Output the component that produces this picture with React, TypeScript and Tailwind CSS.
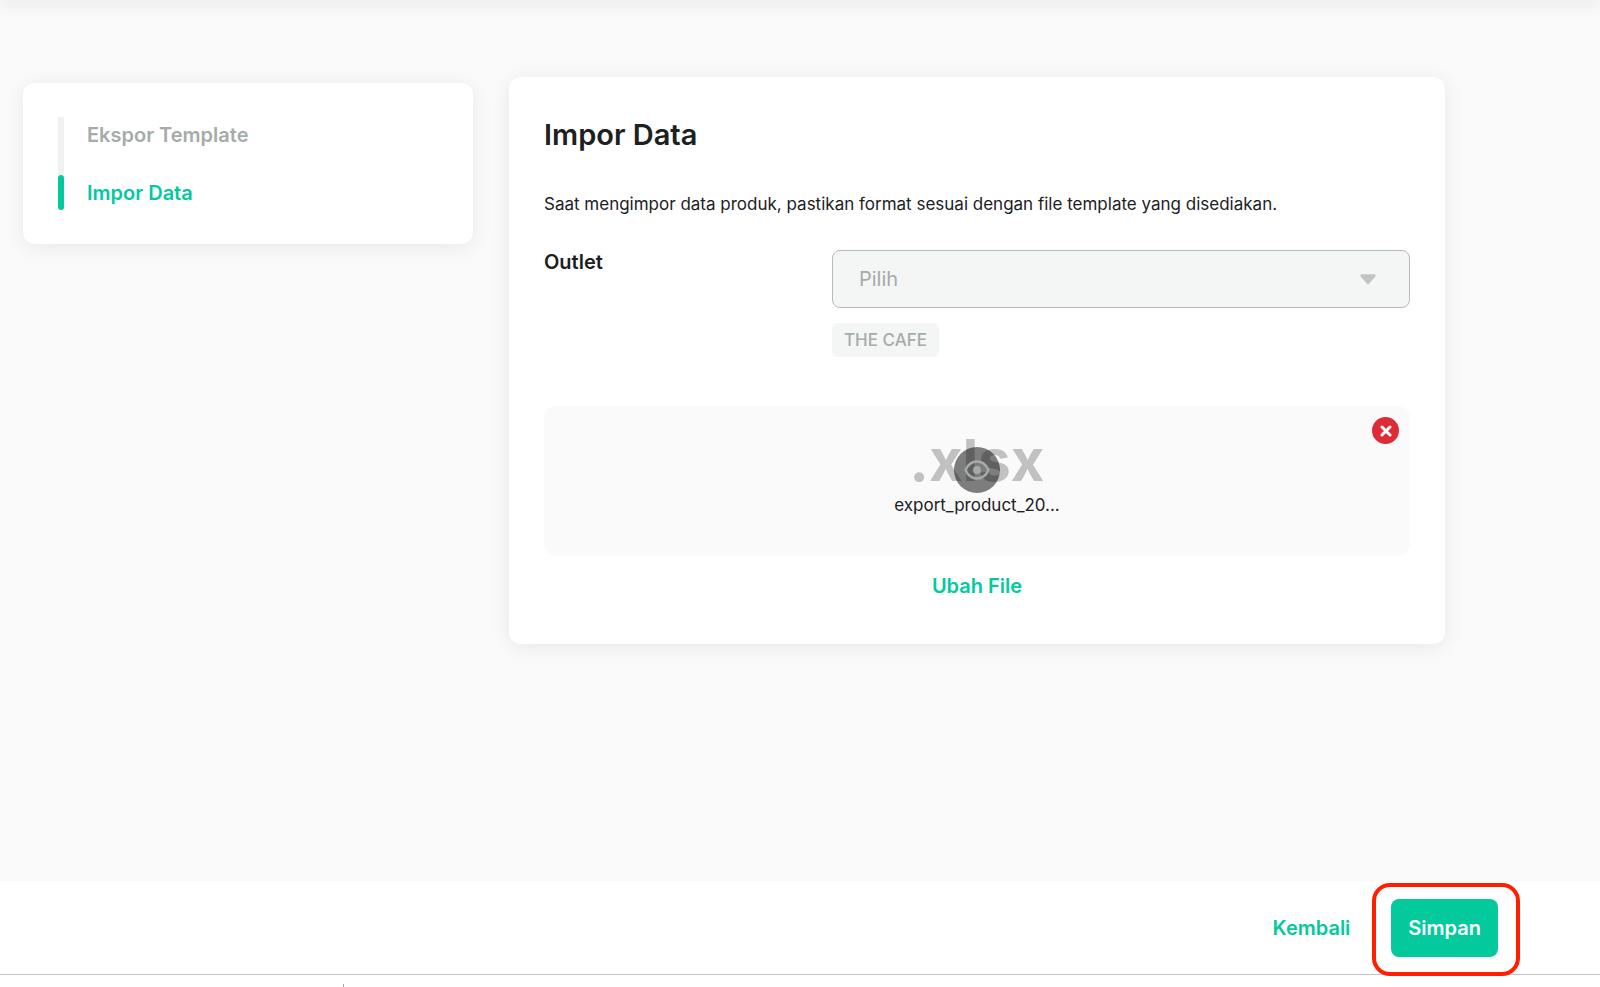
import React from "react";

const steps = [
  { label: "Ekspor Template", active: false },
  { label: "Impor Data", active: true },
];

function StepsCard() {
  return (
    <nav
      aria-label="Langkah"
      className="mt-[6px] rounded-xl bg-white px-[35px] pt-[34px] pb-[34px] shadow-[0_3px_20px_rgba(0,0,0,0.08)]"
    >
      <ol>
        {steps.map((step) => (
          <li key={step.label} className={step.active ? "flex h-[35px]" : "flex h-[58px] items-start"}>
            <span
              className={
                step.active
                  ? "h-full w-[6px] rounded-full bg-[#03c99d]"
                  : "h-full w-[6px] bg-[#eff2f1]"
              }
            />
            <a
              href="#"
              aria-current={step.active ? "step" : undefined}
              className={
                step.active
                  ? "ml-[23px] text-xl leading-9 font-semibold text-[#03c99d]"
                  : "ml-[23px] text-xl leading-9 font-semibold text-[#a5aba9]"
              }
            >
              {step.label}
            </a>
          </li>
        ))}
      </ol>
    </nav>
  );
}

function OutletField() {
  return (
    <div className="mt-[34px] grid grid-cols-[288fr_578fr]">
      <label htmlFor="outlet" className="text-xl leading-6 font-semibold text-[#1c201f]">
        Outlet
      </label>
      <div>
        <div className="relative">
          <select
            id="outlet"
            disabled
            className="h-[58px] w-full appearance-none rounded-lg border border-[#b4bcba] bg-[#f3f6f5] px-[26px] text-xl text-[#a5aba9] opacity-100"
          >
            <option>Pilih</option>
          </select>
          <svg
            aria-hidden="true"
            viewBox="0 0 16 11"
            className="pointer-events-none absolute top-6 right-[34px] h-[11px] w-4 fill-[#c2c4c3]"
          >
            <path d="M1.8 0.3h12.4c1.3 0 1.9 1.4 1 2.4L9 9.7c-.6.6-1.4.6-2 0L.8 2.7C-.1 1.700.5.3 1.8.3z" />
          </svg>
        </div>
        <span className="mt-[15px] inline-block rounded-md bg-[#f3f6f5] px-3 text-[17px] leading-[34px] font-medium text-[#a5aba9]">
          THE CAFE
        </span>
      </div>
    </div>
  );
}

function FilePreview() {
  return (
    <div className="relative mt-[49px] flex h-[150px] flex-col items-center rounded-xl bg-[#fafafa] pt-[25px]">
      <div className="relative">
        <p className="text-[58px] leading-[58px] font-bold text-[#c1c1c1]">.xlsx</p>
        <button
          type="button"
          aria-label="Lihat file"
          className="absolute top-4 left-1/2 flex size-[46px] -translate-x-1/2 items-center justify-center rounded-full bg-black/50"
        >
          <svg viewBox="0 0 26 20" className="h-5 w-[26px]" fill="none">
            <path
              d="M1.5 10C4 4.500 8.200 1.500 13 1.500S22 4.500 24.500 10C22 15.500 17.800 18.500 13 18.500S4 15.500 1.500 10z"
              stroke="#a5aba9"
              strokeWidth="2.400"
              strokeLinejoin="round"
            />
            <circle cx="13" cy="10" r="3.900" fill="#a5aba9" />
          </svg>
        </button>
      </div>
      <p className="mt-1 text-[17px] leading-6 text-[#1c201f]">export_product_20...</p>
      <button
        type="button"
        aria-label="Hapus file"
        className="absolute top-[11px] right-[11px] flex size-[27px] items-center justify-center rounded-full bg-[#de2b38]"
      >
        <svg viewBox="0 0 12 12" className="size-3" fill="none">
          <path d="M2 2l8 8M10 2l-8 8" stroke="#fff" strokeWidth="3" strokeLinecap="round" />
        </svg>
      </button>
    </div>
  );
}

export default function App() {
  return (
    <div className="flex min-h-screen flex-col bg-[#fafafa] font-['Inter',sans-serif]">
      <header className="h-0 shadow-[0_0_16px_3px_rgba(0,0,0,0.13)]" />
      <main className="grid flex-1 grid-cols-[25fr_52fr] items-start gap-9 pt-[77px] pr-[155px] pb-16 pl-[23px]">
        <StepsCard />
        <section className="rounded-xl bg-white px-[35px] pt-10 pb-[41px] shadow-[0_3px_20px_rgba(0,0,0,0.08)]">
          <h1 className="text-[29px] leading-9 font-semibold text-[#1c201f]">Impor Data</h1>
          <p className="mt-[39px] text-[17px] leading-6 text-[#1c201f]">
            Saat mengimpor data produk, pastikan format sesuai dengan file template yang disediakan.
          </p>
          <OutletField />
          <FilePreview />
          <div className="mt-[13px] flex justify-center">
            <button type="button" className="text-xl leading-[34px] font-semibold text-[#03c99d]">
              Ubah File
            </button>
          </div>
        </section>
      </main>
      <footer className="bg-white">
        <div className="flex h-[94px] items-center justify-end border-b border-[#c4c4c4] pr-[102px]">
          <button type="button" className="mr-[41px] text-xl font-semibold text-[#03c99d]">
            Kembali
          </button>
          <div className="relative">
            <button
              type="button"
              className="h-[58px] rounded-lg bg-[#03c99d] px-[17px] text-xl font-semibold text-white"
            >
              Simpan
            </button>
            <span className="pointer-events-none absolute -top-4 -right-[22px] -bottom-[19px] -left-[19px] rounded-[18px] border-4 border-[#ff1e00]" />
          </div>
        </div>
        <div className="flex h-3 items-end pl-[343px]">
          <span className="h-[3px] w-px bg-[#a5a5a5]" />
        </div>
      </footer>
    </div>
  );
}
